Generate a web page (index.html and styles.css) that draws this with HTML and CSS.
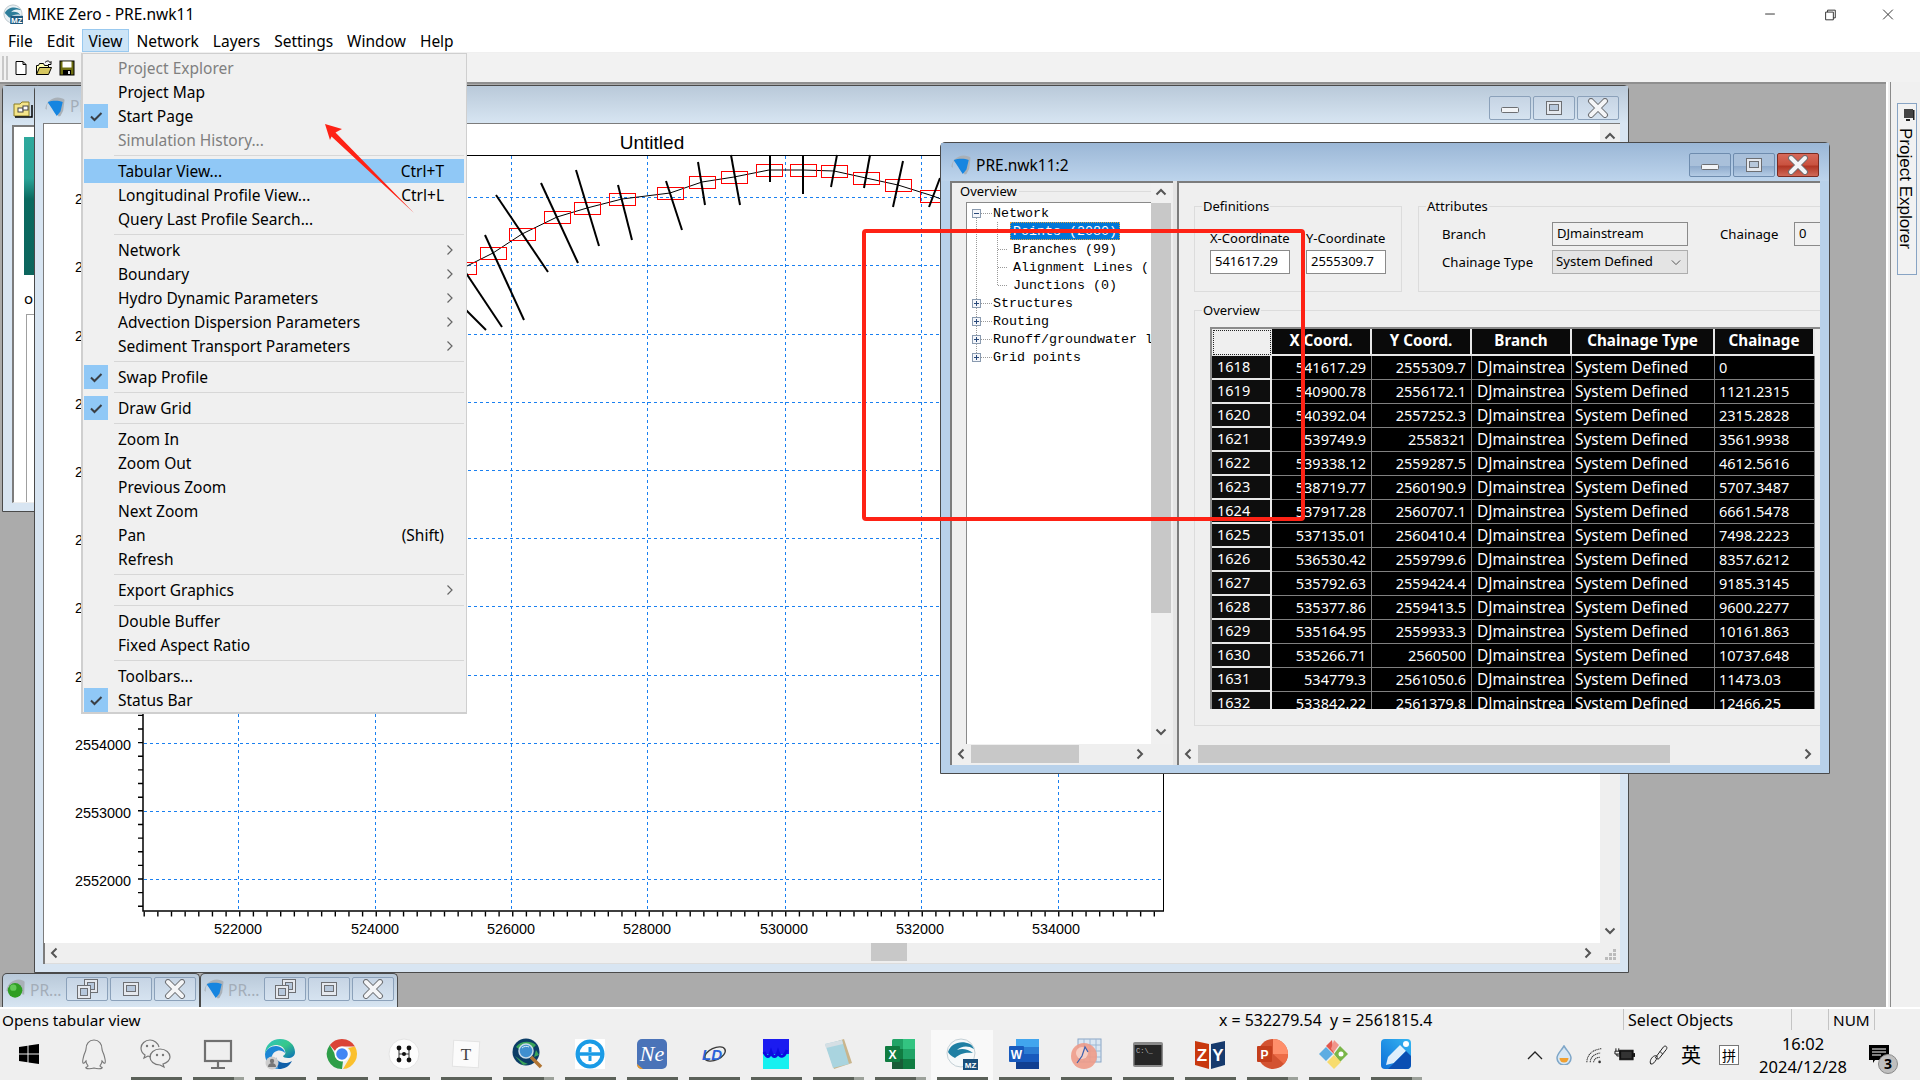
FILE: index.html
```html
<!DOCTYPE html>
<html lang="en">
<head>
<meta charset="utf-8">
<title>MIKE Zero - PRE.nwk11</title>
<link rel="stylesheet" href="styles.css">
</head>
<body>
<svg class="defs" aria-hidden="true">
  <defs>
    <symbol id="g-min" viewBox="0 0 24 20"><rect x="3.5" y="9.5" width="17" height="5" rx="1" fill="#f2f4f7" stroke="#6d6f73"/></symbol>
    <symbol id="g-max" viewBox="0 0 24 20"><rect x="4.5" y="3.5" width="15" height="13" fill="#e4e8ee" stroke="#6d6f73"/><rect x="7.5" y="6.5" width="9" height="6" fill="#b7c8dc" stroke="#6d6f73"/></symbol>
    <symbol id="g-close" viewBox="0 0 24 20"><path d="M5 3l14 14M19 3L5 17" stroke="#6d6f73" stroke-width="6" stroke-linecap="round"/><path d="M5 3l14 14M19 3L5 17" stroke="#f4f5f7" stroke-width="4" stroke-linecap="round"/></symbol>
    <symbol id="g-restore" viewBox="0 0 24 20"><rect x="9.5" y="0.5" width="13" height="13" fill="#e4e8ee" stroke="#6d6f73"/><rect x="12.5" y="3.5" width="7" height="7" fill="#b7c8dc" stroke="#6d6f73"/><rect x="2.5" y="6.5" width="13" height="13" fill="#e4e8ee" stroke="#6d6f73"/><rect x="5.5" y="9.5" width="7" height="7" fill="#b7c8dc" stroke="#6d6f73"/></symbol>
    <symbol id="chev" viewBox="0 0 12 12"><path d="M1.5 8.5L6 4l4.500 4.500" fill="none" stroke="#555" stroke-width="2"/></symbol>
    <symbol id="wedge" viewBox="0 0 22 22"><path d="M0.500 13C1 6 7 0.500 14 0.500c3 0 6 1 7.500 2.500L20 15l-3 6-2 0.500C12 15 6 9 3 7 2 9 1.500 11 2 14z" fill="#a9b0b7"/><path d="M3 5.500c5-2 12-2 16.500 0L17 16l-4 5C9 15 6 10 3 5.500z" fill="#1685e0"/></symbol>
    <symbol id="ball" viewBox="0 0 22 22"><path d="M0.500 13C1 6 7 0.500 14 0.500c3 0 5 1 6.500 2.500L20 17h-2C18 9 9 5 3 8c-1 2-1 4-1 6z" fill="#a9b0b7"/><circle cx="10" cy="12.500" r="8" fill="#2f9e24"/><circle cx="8" cy="9.500" r="3.500" fill="#63c957"/></symbol>
    <symbol id="chk" viewBox="0 0 24 24"><path d="M7 12.500l3.500 3.500L17.500 9" fill="none" stroke="#3a3f45" stroke-width="2"/></symbol>
    <symbol id="sub" viewBox="0 0 8 12"><path d="M1.500 1.500L6 6l-4.500 4.500" fill="none" stroke="#666" stroke-width="1.200"/></symbol>
  </defs>
</svg>

<div class="app">
  <header class="titlebar">
    <svg class="appicon" viewBox="0 0 22 22"><circle cx="11" cy="11" r="10" fill="#e8f0f4" stroke="#b9c4ca"/><path d="M2 10C5 3 15 2 20 7c-5-2-9-1-11 2 4-1 8 0 10 3-4-1-9 0-12 3z" fill="#2d7d9a"/><rect x="8" y="13" width="14" height="9" fill="#1e5a80"/><text x="15" y="21" class="appicon-t">MZ</text></svg>
    <span class="titletext">MIKE Zero - PRE.nwk11</span>
    <div class="capbtns">
      <svg class="cap" viewBox="0 0 58 30"><path d="M24 14.500h10" stroke="#333" fill="none"/></svg>
      <svg class="cap" viewBox="0 0 58 30"><path d="M25.500 12.500h8v8h-8zM27.500 12.500v-2h8v8h-2" stroke="#333" fill="none"/></svg>
      <svg class="cap" viewBox="0 0 58 30"><path d="M24 10l10 10M34 10L24 20" stroke="#333" fill="none"/></svg>
    </div>
  </header>

  <nav class="menubar">
    <span class="mi">File</span><span class="mi">Edit</span><span class="mi mi-on">View</span><span class="mi">Network</span><span class="mi">Layers</span><span class="mi">Settings</span><span class="mi">Window</span><span class="mi">Help</span>
  </nav>

  <div class="toolbar">
    <span class="grip"></span>
    <svg class="tool" viewBox="0 0 16 16"><path d="M3 1.500h7l3 3v10H3z" fill="#fff" stroke="#000"/><path d="M10 1.500v3h3" fill="none" stroke="#000"/></svg>
    <svg class="tool" viewBox="0 0 16 16"><path d="M0.500 14.500v-9h2l1-2h4l1 2h4v2" fill="#ffffb0" stroke="#000"/><path d="M0.500 14.500l3-7h12l-3 7z" fill="#d6c760" stroke="#000"/><path d="M9 2.500c2-2 4-2 5 0l1-1v3h-3" fill="none" stroke="#000"/></svg>
    <svg class="tool" viewBox="0 0 16 16"><rect x="1" y="1" width="14" height="14" fill="#6e6e10" stroke="#000"/><rect x="3.500" y="1.500" width="9" height="6" fill="#fff"/><rect x="4" y="10" width="8" height="5" fill="#000"/><rect x="9" y="11" width="2" height="3" fill="#ddd"/></svg>
  </div>

  <div class="workspace">
    <main class="mdi">
      <section class="win win1">
        <div class="win-title win-title-pale">
          <svg class="folder" viewBox="0 0 20 18"><path d="M1 16V4h6l2-2h7v14z" fill="#f4e58a" stroke="#8a7d22"/><rect x="5" y="8" width="5" height="4" fill="#fff" stroke="#444"/><rect x="10" y="6" width="5" height="4" fill="#fff" stroke="#444"/><path d="M2 17h17V5" fill="none" stroke="#000" stroke-width="1.500"/></svg>
        </div>
        <div class="win1-client">
          <div class="teal"></div>
          <span class="win1-o">o</span>
          <div class="win1-box"></div>
        </div>
      </section>

      <section class="win win2">
        <div class="win-title win-title-pale">
          <svg class="wicon"><use href="#wedge"/></svg>
          <span class="wname wname-off">PRE.nwk11:1</span>
          <div class="wbtns">
            <span class="wb"><svg class="glyph"><use href="#g-min"/></svg></span>
            <span class="wb"><svg class="glyph"><use href="#g-max"/></svg></span>
            <span class="wb"><svg class="glyph"><use href="#g-close"/></svg></span>
          </div>
        </div>
        <div class="win2-client">
          <div class="canvas-row">
            <svg class="chart" viewBox="44 124 1556 819" width="1556" height="819">
              <text x="652" y="149" class="ct-title">Untitled</text>
              <g class="grid">
                <path d="M144 197.500H1163M144 265.500H1163M144 334.500H1163M144 402.500H1163M144 470.500H1163M144 538.500H1163M144 606.500H1163M144 675.500H1163M144 743.500H1163M144 811.500H1163M144 879.500H1163"/>
                <path d="M238.500 156V911M375.500 156V911M511.500 156V911M647.500 156V911M785.500 156V911M921.500 156V911M1058.500 156V911"/>
              </g>
              <path d="M143 155.500H1163.500V911" class="axis-thin"/>
              <path d="M143 155V911H1164" class="axis-bold"/>
              <line x1="140.500" y1="907" x2="140.500" y2="155" class="ticks-y"/>
              <line x1="143.500" y1="914" x2="1163" y2="914" class="ticks-x"/>
              <g class="lab-y">
                <text x="131" y="203.500">2562000</text><text x="131" y="271.500">2561000</text><text x="131" y="340.500">2560000</text><text x="131" y="408.500">2559000</text><text x="131" y="476.500">2558000</text><text x="131" y="544.500">2557000</text><text x="131" y="612.500">2556000</text><text x="131" y="681.500">2555000</text><text x="131" y="749.500">2554000</text><text x="131" y="817.500">2553000</text><text x="131" y="885.500">2552000</text>
              </g>
              <g class="lab-x">
                <text x="238" y="934">522000</text><text x="375" y="934">524000</text><text x="511" y="934">526000</text><text x="647" y="934">528000</text><text x="784" y="934">530000</text><text x="920" y="934">532000</text><text x="1056" y="934">534000</text>
              </g>
              <polyline class="link" points="463,268 493,253 522,234 557,217 587,208 622,199 670,193 702,182 734,177 769,170 803,170 834,171 866,178 898,185 933,196 970,210"/>
              <g class="bx">
                <rect x="450.500" y="262.500" width="26" height="12"/><rect x="480.500" y="247.500" width="26" height="12"/><rect x="509.500" y="228.500" width="26" height="12"/><rect x="544.500" y="211.500" width="26" height="12"/><rect x="574.500" y="202.500" width="26" height="12"/><rect x="609.500" y="193.500" width="26" height="12"/><rect x="657.500" y="187.500" width="26" height="12"/><rect x="689.500" y="176.500" width="26" height="12"/><rect x="721.500" y="171.500" width="26" height="12"/><rect x="756.500" y="164.500" width="26" height="12"/><rect x="790.500" y="164.500" width="26" height="12"/><rect x="821.500" y="165.500" width="26" height="12"/><rect x="853.500" y="172.500" width="26" height="12"/><rect x="885.500" y="179.500" width="26" height="12"/><rect x="920.500" y="190.500" width="26" height="12"/>
              </g>
              <g class="xs">
                <line x1="440" y1="234" x2="502" y2="327"/><line x1="440" y1="284" x2="486" y2="330"/>
                <line x1="485" y1="235" x2="524" y2="320"/><line x1="496" y1="195" x2="548" y2="272"/><line x1="541" y1="183" x2="578" y2="263"/><line x1="576" y1="170" x2="599" y2="246"/><line x1="618" y1="185" x2="632" y2="240"/><line x1="666" y1="181" x2="682" y2="230"/><line x1="698" y1="162" x2="705" y2="205"/><line x1="731" y1="155" x2="740" y2="205"/><line x1="770" y1="155" x2="770" y2="182"/><line x1="803" y1="155" x2="803" y2="194"/><line x1="837" y1="155" x2="831" y2="187"/><line x1="870" y1="155" x2="864" y2="188"/><line x1="903" y1="161" x2="893" y2="207"/><line x1="940" y1="178" x2="929" y2="207"/>
              </g>
            </svg>
            <div class="vscroll2">
              <svg class="arrow"><use href="#chev"/></svg>
              <svg class="arrow rot180"><use href="#chev"/></svg>
            </div>
          </div>
          <div class="hscroll2">
            <svg class="arrow rot270"><use href="#chev"/></svg>
            <span class="thumb2"></span>
            <svg class="arrow rot90"><use href="#chev"/></svg>
            <svg class="sizegrip" viewBox="0 0 12 12"><path d="M8 0h3v3H8zM4 4h3v3H4zM8 4h3v3H8zM0 8h3v3H0zM4 8h3v3H4zM8 8h3v3H8z" fill="#bbb"/></svg>
          </div>
        </div>
      </section>

      <section class="win win3">
        <div class="win-title win-title-active">
          <svg class="wicon"><use href="#wedge"/></svg>
          <span class="wname">PRE.nwk11:2</span>
          <div class="wbtns">
            <span class="wb wb-dark"><svg class="glyph"><use href="#g-min"/></svg></span>
            <span class="wb wb-dark"><svg class="glyph"><use href="#g-max"/></svg></span>
            <span class="wb wb-red"><svg class="glyph"><use href="#g-close"/></svg></span>
          </div>
        </div>
        <div class="win3-client">
          <div class="lp">
            <div class="lp-main">
              <div class="lp-col">
                <div class="lp-legend"><span>Overview</span></div>
                <div class="tree">
                  <svg class="tree-lines" width="40" height="170" viewBox="966 203 40 170">
                    <path d="M975.500 218V299M975.500 308V317M975.500 326V335M975.500 344V353M980 213.500H991M980 303.500H991M980 321.500H991M980 339.500H991M980 357.500H991M996.500 222V286M997 231.500H1010M997 249.500H1010M997 267.500H1010M997 285.500H1010" class="dots"/>
                    <g class="exp">
                      <rect x="971.500" y="209.500" width="8" height="8"/><rect x="971.500" y="299.500" width="8" height="8"/><rect x="971.500" y="317.500" width="8" height="8"/><rect x="971.500" y="335.500" width="8" height="8"/><rect x="971.500" y="353.500" width="8" height="8"/>
                      <path d="M973 213.500h5M973 303.500h5M975.500 301v5M973 321.500h5M975.500 319v5M973 339.500h5M975.500 337v5M973 357.500h5M975.500 355v5" class="sign"/>
                    </g>
                  </svg>
                  <div class="node root">Network</div>
                  <div class="node kid sel">Points (2080)</div>
                  <div class="node kid">Branches (99)</div>
                  <div class="node kid">Alignment Lines (</div>
                  <div class="node kid">Junctions (0)</div>
                  <div class="node root">Structures</div>
                  <div class="node root">Routing</div>
                  <div class="node root">Runoff/groundwater l</div>
                  <div class="node root">Grid points</div>
                </div>
              </div>
              <div class="lp-v">
                <svg class="arrow"><use href="#chev"/></svg>
                <span class="lp-thumb"></span>
                <span class="grow"></span>
                <svg class="arrow rot180"><use href="#chev"/></svg>
              </div>
            </div>
            <div class="lp-h">
              <svg class="arrow rot270"><use href="#chev"/></svg>
              <span class="lp-hthumb"></span>
              <span class="grow"></span>
              <svg class="arrow rot90"><use href="#chev"/></svg>
            </div>
          </div>
          <div class="split"></div>
          <div class="rp">
            <div class="rp-body">
              <div class="rp-top">
                <div class="group g-def">
                  <span class="legend">Definitions</span>
                  <div class="coord"><label>X-Coordinate</label><span class="input">541617.29</span></div>
                  <div class="coord"><label>Y-Coordinate</label><span class="input">2555309.7</span></div>
                </div>
                <div class="group g-attr">
                  <span class="legend">Attributes</span>
                  <label>Branch</label><span class="input input-wide">DJmainstream</span><label class="lab-ch">Chainage</label><span class="input input-short">0</span>
                  <label>Chainage Type</label>
                  <span class="select">System Defined<svg class="sel-arrow" viewBox="0 0 12 8"><path d="M1 1.500l5 5 5-5" fill="none" stroke="#555" stroke-width="1.200"/></svg></span>
                </div>
              </div>
              <div class="group g-over">
                <span class="legend">Overview</span>
                <div class="tbl-wrap">
                  <table class="tbl">
                    <colgroup><col class="c-rh"><col class="c-n"><col class="c-n"><col class="c-n"><col class="c-t"><col class="c-n"></colgroup>
                    <thead><tr><th class="corner"></th><th>X Coord.</th><th>Y Coord.</th><th>Branch</th><th>Chainage Type</th><th>Chainage</th></tr></thead>
                    <tbody>
                      <tr><th>1618</th><td class="r">541617.29</td><td class="r">2555309.7</td><td>DJmainstrea</td><td>System Defined</td><td>0</td></tr>
                      <tr><th>1619</th><td class="r">540900.78</td><td class="r">2556172.1</td><td>DJmainstrea</td><td>System Defined</td><td>1121.2315</td></tr>
                      <tr><th>1620</th><td class="r">540392.04</td><td class="r">2557252.3</td><td>DJmainstrea</td><td>System Defined</td><td>2315.2828</td></tr>
                      <tr><th>1621</th><td class="r">539749.9</td><td class="r">2558321</td><td>DJmainstrea</td><td>System Defined</td><td>3561.9938</td></tr>
                      <tr><th>1622</th><td class="r">539338.12</td><td class="r">2559287.5</td><td>DJmainstrea</td><td>System Defined</td><td>4612.5616</td></tr>
                      <tr><th>1623</th><td class="r">538719.77</td><td class="r">2560190.9</td><td>DJmainstrea</td><td>System Defined</td><td>5707.3487</td></tr>
                      <tr><th>1624</th><td class="r">537917.28</td><td class="r">2560707.1</td><td>DJmainstrea</td><td>System Defined</td><td>6661.5478</td></tr>
                      <tr><th>1625</th><td class="r">537135.01</td><td class="r">2560410.4</td><td>DJmainstrea</td><td>System Defined</td><td>7498.2223</td></tr>
                      <tr><th>1626</th><td class="r">536530.42</td><td class="r">2559799.6</td><td>DJmainstrea</td><td>System Defined</td><td>8357.6212</td></tr>
                      <tr><th>1627</th><td class="r">535792.63</td><td class="r">2559424.4</td><td>DJmainstrea</td><td>System Defined</td><td>9185.3145</td></tr>
                      <tr><th>1628</th><td class="r">535377.86</td><td class="r">2559413.5</td><td>DJmainstrea</td><td>System Defined</td><td>9600.2277</td></tr>
                      <tr><th>1629</th><td class="r">535164.95</td><td class="r">2559933.3</td><td>DJmainstrea</td><td>System Defined</td><td>10161.863</td></tr>
                      <tr><th>1630</th><td class="r">535266.71</td><td class="r">2560500</td><td>DJmainstrea</td><td>System Defined</td><td>10737.648</td></tr>
                      <tr><th>1631</th><td class="r">534779.3</td><td class="r">2561050.6</td><td>DJmainstrea</td><td>System Defined</td><td>11473.03</td></tr>
                      <tr><th>1632</th><td class="r">533842.22</td><td class="r">2561379.8</td><td>DJmainstrea</td><td>System Defined</td><td>12466.25</td></tr>
                    </tbody>
                  </table>
                </div>
              </div>
            </div>
            <div class="rp-h">
              <svg class="arrow rot270"><use href="#chev"/></svg>
              <span class="rp-hthumb"></span>
              <span class="grow"></span>
              <svg class="arrow rot90"><use href="#chev"/></svg>
            </div>
          </div>
        </div>
      </section>

      <section class="win minw min1">
        <svg class="wicon"><use href="#ball"/></svg>
        <span class="minname">PR...</span>
        <span class="wb"><svg class="glyph"><use href="#g-restore"/></svg></span>
        <span class="wb"><svg class="glyph"><use href="#g-max"/></svg></span>
        <span class="wb"><svg class="glyph"><use href="#g-close"/></svg></span>
      </section>
      <section class="win minw min2">
        <svg class="wicon"><use href="#wedge"/></svg>
        <span class="minname">PR...</span>
        <span class="wb"><svg class="glyph"><use href="#g-restore"/></svg></span>
        <span class="wb"><svg class="glyph"><use href="#g-max"/></svg></span>
        <span class="wb"><svg class="glyph"><use href="#g-close"/></svg></span>
      </section>
    </main>

    <aside class="sidepanel">
      <div class="sidetab">
        <svg class="sideicon" viewBox="0 0 14 14"><path d="M3 1h9v9H3zM5 3h5v5H5z" fill="#444"/><path d="M5 11h4v2H5zM12 2h1.500v10H12z" fill="#222"/></svg>
        <span class="sidetext">Project Explorer</span>
      </div>
    </aside>
  </div>

  <footer class="statusbar">
    <span class="st st-a">Opens tabular view</span>
    <span class="st st-b">x = 532279.54&nbsp; y = 2561815.4</span>
    <span class="st st-c">Select Objects</span>
    <span class="st st-d"></span>
    <span class="st st-e">NUM</span>
  </footer>

  <div class="taskbar">
    <span class="task task-start"><svg class="ti ti-win" viewBox="0 0 20 20"><path d="M0 3l8.500-1.200V9.500H0zM9.500 1.600L20 0v9.500H9.500zM0 10.500h8.500v7.700L0 17zM9.500 10.500H20V20L9.500 18.400z" fill="#000"/></svg></span>
    <span class="task"><svg class="ti" viewBox="0 0 32 32"><path d="M16 2c-5 0-8 4-8 9 0 2-1 3-2 6-1 4-2 7-1 8s2-1 3-2c0 3 2 4 2 5s-3 1-2 2 5 1 8 0c3 1 7 1 8 0s-2-1-2-2 2-2 2-5c1 1 2 3 3 2s0-4-1-8c-1-3-2-4-2-6 0-5-3-9-8-9z" fill="none" stroke="#777" stroke-width="1.100"/></svg></span>
    <span class="task on"><svg class="ti" viewBox="0 0 32 32"><g fill="none" stroke="#777" stroke-width="1.200"><path d="M19 9c-1-4-5-7-9-7C5 2 1 6 1 10c0 3 1 5 4 7l-1 3 4-2c1 0 2 1 3 1"/><path d="M20 11c-6 0-10 4-10 8s4 8 10 8l4 2-1-3c4-1 7-4 7-7 0-4-4-8-10-8z"/></g><g fill="#777"><circle cx="7" cy="8" r="1.200"/><circle cx="13" cy="8" r="1.200"/><circle cx="17" cy="17" r="1.200"/><circle cx="23" cy="17" r="1.200"/></g></svg></span>
    <span class="task on multi"><svg class="ti" viewBox="0 0 32 32"><rect x="3" y="3" width="26" height="20" fill="none" stroke="#707070" stroke-width="2.200"/><path d="M16 23v6M9 30h14" stroke="#707070" stroke-width="2.200"/></svg></span>
    <span class="task on"><svg class="ti" viewBox="0 0 32 32"><defs><linearGradient id="edge" x1="0" y1="0" x2="1" y2="1"><stop offset="0" stop-color="#2fc3c4"/><stop offset=".5" stop-color="#36c889"/><stop offset="1" stop-color="#0a6bb8"/></linearGradient></defs><path d="M1 16C1 7 8 1 16 1c9 0 15 6 15 13 0 4-3 6-7 6-3 0-5-1-5-2 2-1 3-3 2-5-1-4-5-6-9-6C7 7 2 11 1 16z" fill="url(#edge)"/><path d="M1 16c1-5 6-8 11-8 5 0 9 4 9 7-2-2-5-3-8-2-4 1-6 5-5 9 1 4 5 8 9 9C8 32 1 25 1 16z" fill="#1b86d4"/><path d="M15 31c5 0 10-2 13-8-3 2-8 3-12 1-2-1-4-3-4-5 0 6 1 11 3 12z" fill="#0f5fa8"/><circle cx="8" cy="25" r="6.500" fill="#cdcdcd"/><circle cx="8" cy="23" r="2.200" fill="#777"/><path d="M4 29c0-3 2-4 4-4s4 1 4 4z" fill="#777"/></svg></span>
    <span class="task on"><svg class="ti" viewBox="0 0 32 32"><path d="M16 1a15 15 0 0 1 13 7.500H16a7.500 7.500 0 0 0-7 4.500L3.800 7A15 15 0 0 1 16 1z" fill="#db4437"/><path d="M29 8.500A15 15 0 0 1 17 31l6.500-11A7.500 7.500 0 0 0 22 10z" fill="#fbc02d"/><path d="M3.800 7L10 18a7.500 7.500 0 0 0 7 5l-1 8A15 15 0 0 1 3.800 7z" fill="#2e9e48"/><circle cx="16" cy="16" r="7.500" fill="#fff"/><circle cx="16" cy="16" r="5.800" fill="#4285f4"/></svg></span>
    <span class="task on"><svg class="ti" viewBox="0 0 32 32"><circle cx="16" cy="16" r="15" fill="#fdfdfd" stroke="#e4e4e4"/><path d="M11 10v12M21 10v12M11 16h10" stroke="#333"/><g fill="#111"><circle cx="11" cy="10" r="2.400"/><circle cx="21" cy="10" r="2.400"/><circle cx="11" cy="22" r="2.400"/><circle cx="21" cy="22" r="2.400"/><circle cx="16" cy="16" r="2"/></g></svg></span>
    <span class="task on"><svg class="ti" viewBox="0 0 32 32"><rect x="3" y="3" width="26" height="26" fill="#fbfbfb" stroke="#e3e3e3" transform="rotate(3 16 16)"/><text x="16" y="22" class="ti-t">T</text></svg></span>
    <span class="task on multi"><svg class="ti" viewBox="0 0 32 32"><circle cx="14" cy="14" r="13.500" fill="#0b3d66"/><path d="M4 9c4-6 14-7 20-2l-5 5-9 1zM3 18c3 2 7 6 13 8l-5 1zM24 12l3 5-5 2z" fill="#3aa45a"/><circle cx="14" cy="13" r="7" fill="#3f8fcf" stroke="#c9dbe8" stroke-width="1.500"/><path d="M10 10c2-2 5-2 7-1" fill="none" stroke="#d9eefb"/><path d="M19 19l10 10" stroke="#b07432" stroke-width="3.500"/></svg></span>
    <span class="task on"><svg class="ti" viewBox="0 0 32 32"><rect x="1" y="1" width="30" height="30" fill="#fff"/><circle cx="16" cy="16" r="12.500" fill="none" stroke="#1a9be6" stroke-width="4"/><path d="M4 16h24" stroke="#1a9be6" stroke-width="3.500"/><path d="M16 9v5M16 18v5" stroke="#1a9be6" stroke-width="3"/></svg></span>
    <span class="task on"><svg class="ti" viewBox="0 0 32 32"><rect x="1" y="1" width="30" height="30" rx="5" fill="#4a73b8"/><path d="M1 26l6 5H6c-3 0-5-2-5-5z" fill="#e99a2c"/><text x="16" y="23" class="ti-ne">Ne</text></svg></span>
    <span class="task on"><svg class="ti" viewBox="0 0 32 32"><ellipse cx="17" cy="16" rx="11" ry="6" fill="none" stroke="#3a3a3a" stroke-width="1.400" transform="rotate(-25 17 16)"/><text x="14" y="22" class="ti-ld">LD</text></svg></span>
    <span class="task on"><svg class="ti" viewBox="0 0 32 32"><rect x="3" y="1" width="26" height="15" fill="#1b1bf0"/><rect x="3" y="16" width="26" height="15" fill="#16f0f0"/><path d="M4 14c3 6 5 6 7 0 2 6 5 6 7 0 2 6 6 6 9-2" fill="none" stroke="#0b0be0" stroke-width="3"/></svg></span>
    <span class="task on multi"><svg class="ti" viewBox="0 0 32 32"><path d="M4 7l18-6 8 24-18 6z" fill="#c9b58c"/><path d="M3 6l17-4 7 24-16 4z" fill="#a9d4df"/><path d="M3 6l17-4 1 4-17 4z" fill="#d5dfe4"/></svg></span>
    <span class="task on multi"><svg class="ti" viewBox="0 0 32 32"><rect x="8" y="1" width="23" height="30" rx="1.500" fill="#21a366"/><rect x="19" y="1" width="12" height="10" fill="#33c481"/><rect x="8" y="11" width="11" height="10" fill="#107c41"/><rect x="19" y="21" width="12" height="10" fill="#107c41"/><rect x="8" y="21" width="11" height="10" fill="#185c37"/><rect x="1" y="8" width="15" height="16" rx="1" fill="#107c41"/><text x="8.500" y="20.500" class="ti-x">X</text></svg></span>
    <span class="task on cur"><svg class="ti" viewBox="0 0 32 32"><circle cx="15" cy="15" r="14" fill="#f6f9fa" stroke="#c4d0d6"/><path d="M2 14C5 5 15 2 24 6c2 1 3 3 4 5-6-4-13-3-17 1 5-2 11-1 16 3-6-1-13 0-18 5-4-2-6-4-7-6z" fill="#1f7fa3"/><rect x="17" y="21" width="15" height="11" fill="#1a4f7a"/><text x="24.500" y="30" class="ti-mz">MZ</text></svg></span>
    <span class="task on"><svg class="ti" viewBox="0 0 32 32"><rect x="8" y="1" width="23" height="30" rx="1.500" fill="#2b7cd3"/><rect x="8" y="1" width="23" height="8" fill="#41a5ee"/><rect x="8" y="16" width="23" height="8" fill="#185abd"/><rect x="8" y="24" width="23" height="7" fill="#103f91"/><rect x="1" y="8" width="15" height="16" rx="1" fill="#185abd"/><text x="8.500" y="20.500" class="ti-x">W</text></svg></span>
    <span class="task on"><svg class="ti" viewBox="0 0 32 32"><rect x="8" y="1" width="23" height="23" fill="#dbe7f2" stroke="#8aa6c6"/><path d="M14 1v23M20 1v23M26 1v23M8 7h23M8 13h23M8 19h23" stroke="#9db8d4"/><circle cx="14" cy="18" r="13" fill="#ee9b88" opacity=".9"/><circle cx="12" cy="15" r="6" fill="#fbe1d8" opacity=".7"/><path d="M7 25l5-7 3-9 3 5" fill="none" stroke="#3a5fae" stroke-width="1.200"/></svg></span>
    <span class="task on"><svg class="ti" viewBox="0 0 32 32"><rect x="1" y="4" width="30" height="25" rx="2" fill="#8a8a8a"/><rect x="2.500" y="7" width="27" height="20" fill="#262626"/><text x="4" y="15" class="ti-c">C:\_</text></svg></span>
    <span class="task on"><svg class="ti" viewBox="0 0 32 32"><path d="M1 3l14 3v25L1 27z" fill="#c8380e"/><path d="M31 3L17 6v25l14-4z" fill="#163a6d"/><text x="8" y="23" class="ti-zy">Z</text><text x="24" y="23" class="ti-zy">Y</text></svg></span>
    <span class="task on multi"><svg class="ti" viewBox="0 0 32 32"><circle cx="17" cy="16" r="15" fill="#d35230"/><path d="M17 1a15 15 0 0 1 15 15H17z" fill="#ff8f6b"/><path d="M17 16h15a15 15 0 0 1-4 10z" fill="#ed6c47"/><rect x="1" y="8" width="15" height="16" rx="1" fill="#c43e1c"/><text x="8.500" y="20.500" class="ti-x">P</text></svg></span>
    <span class="task on"><svg class="ti" viewBox="0 0 32 32"><path d="M16 16L8 8l6-6z" fill="#e2574c"/><path d="M16 16l6-8 8 8-8 8z" fill="#7ab648"/><path d="M16 17l7 7-7 7-7-7z" fill="#f7dc6f"/><path d="M15 16l-7 7-7-7 7-7z" fill="#5dade2"/><path d="M16 2l5 5-5 7-3-3z" fill="#f1948a"/><circle cx="23" cy="16" r="2.500" fill="#fff"/></svg></span>
    <span class="task on multi"><svg class="ti" viewBox="0 0 32 32"><defs><linearGradient id="pen" x1="0" y1="1" x2="1" y2="0"><stop offset="0" stop-color="#0d6fd8"/><stop offset="1" stop-color="#35b6f2"/></linearGradient></defs><rect x="1" y="1" width="30" height="30" rx="4" fill="url(#pen)"/><path d="M6 27l2-8L20 7l6 6-12 12z" fill="#fff" opacity=".85"/><path d="M14 25L26 13l5 5v9c0 2-2 4-4 4H8z" fill="#0a4fb3"/><circle cx="26" cy="6" r="3" fill="#fff"/></svg></span>
    <span class="grow"></span>
    <div class="tray">
      <svg class="tr tr-chev" viewBox="0 0 16 10"><path d="M1 9l7-7 7 7" fill="none" stroke="#222" stroke-width="1.300"/></svg>
      <svg class="tr tr-drop" viewBox="0 0 16 20"><path d="M8 1c3 5 7 8 7 12a7 7 0 0 1-14 0C1 9 5 6 8 1z" fill="#d7e6f2" stroke="#7ea6c8" stroke-width="1.500"/><path d="M3.500 13h9a4.500 4.500 0 0 1-9 0z" fill="#f0a030"/></svg>
      <svg class="tr tr-wifi" viewBox="0 0 20 20"><g fill="none" stroke="#333" stroke-width="1.200" stroke-dasharray="1.500 .7"><path d="M1 18C1 9 8 3 18 2"/><path d="M5 18c0-6 5-10 12-11"/><path d="M9 18c0-3 3-6 8-6"/></g><circle cx="16" cy="17.500" r="1.500" fill="#333"/></svg>
      <svg class="tr tr-bat" viewBox="0 0 22 14"><path d="M2 0v3M5 0v3M1 3h5v3H1zM3 6v2h3" fill="none" stroke="#111"/><rect x="6" y="2" width="14" height="10" fill="#111" stroke="#111"/><rect x="7.500" y="3.500" width="11" height="7" fill="#333"/><rect x="20" y="5" width="2" height="4" fill="#111"/></svg>
      <svg class="tr tr-pen" viewBox="0 0 22 22"><path d="M2 21c-2-3 1-8 4-9s4 1 2 4-3 5-6 5zM7 14L16 2c2-2 5 0 3 3l-8 10c-1 1-3 0-4-1zM12 7l3 3" fill="none" stroke="#222" stroke-width="1.100"/></svg>
      <span class="ime">英</span>
      <span class="ime-box">拼</span>
      <div class="clock"><span>16:02</span><span>2024/12/28</span></div>
      <div class="notif">
        <svg class="tr-note" viewBox="0 0 20 18"><path d="M0 0h20v15H6l-2 3v-3H0z" fill="#000"/><path d="M3 4h14M3 7h14M3 10h9" stroke="#fff" stroke-width="1"/></svg>
        <span class="badge">3</span>
      </div>
    </div>
  </div>

  <div class="menu">
    <div class="row off">Project Explorer</div>
    <div class="row">Project Map</div>
    <div class="row"><svg class="check"><use href="#chk"/></svg>Start Page</div>
    <div class="row off">Simulation History...</div>
    <div class="sep"></div>
    <div class="row hot">Tabular View...<span class="key">Ctrl+T</span></div>
    <div class="row">Longitudinal Profile View...<span class="key">Ctrl+L</span></div>
    <div class="row">Query Last Profile Search...</div>
    <div class="sep"></div>
    <div class="row">Network<svg class="more"><use href="#sub"/></svg></div>
    <div class="row">Boundary<svg class="more"><use href="#sub"/></svg></div>
    <div class="row">Hydro Dynamic Parameters<svg class="more"><use href="#sub"/></svg></div>
    <div class="row">Advection Dispersion Parameters<svg class="more"><use href="#sub"/></svg></div>
    <div class="row">Sediment Transport Parameters<svg class="more"><use href="#sub"/></svg></div>
    <div class="sep"></div>
    <div class="row"><svg class="check"><use href="#chk"/></svg>Swap Profile</div>
    <div class="sep"></div>
    <div class="row"><svg class="check"><use href="#chk"/></svg>Draw Grid</div>
    <div class="sep"></div>
    <div class="row">Zoom In</div>
    <div class="row">Zoom Out</div>
    <div class="row">Previous Zoom</div>
    <div class="row">Next Zoom</div>
    <div class="row">Pan<span class="key">(Shift)</span></div>
    <div class="row">Refresh</div>
    <div class="sep"></div>
    <div class="row">Export Graphics<svg class="more"><use href="#sub"/></svg></div>
    <div class="sep"></div>
    <div class="row">Double Buffer</div>
    <div class="row">Fixed Aspect Ratio</div>
    <div class="sep"></div>
    <div class="row">Toolbars...</div>
    <div class="row"><svg class="check"><use href="#chk"/></svg>Status Bar</div>
  </div>

  <svg class="annot" viewBox="0 0 1920 1080" width="1920" height="1080">
    <rect x="864" y="231" width="439" height="288" rx="2" class="annot-rect"/>
    <path d="M325 124L342 129 335.500 132.500 414 213 331.500 136.500 330 140z" class="annot-arrow"/>
  </svg>
</div>
</body>
</html>
```
FILE: styles.css
```css
:root {
  --ui: "Noto Sans", "Open Sans", sans-serif;
  --panel: #efefef;
}
* { box-sizing: border-box; }
html, body { margin: 0; padding: 0; }
body { width: 1920px; height: 1080px; overflow: hidden; font: 15.5px/1.2 var(--ui); color: #000; background: #fff; }
.defs { position: absolute; width: 0; height: 0; }
.grow { flex: 1; }

.app { position: relative; width: 1920px; height: 1080px; display: flex; flex-direction: column; }

/* title bar */
.titlebar { height: 29px; display: flex; align-items: center; padding: 0 0 1px 3px; background: #fff; flex: none; }
.appicon { width: 20px; height: 20px; margin-right: 4px; }
.appicon-t { font: bold 8px var(--ui); fill: #fff; text-anchor: middle; }
.titletext { font-size: 15.500px; }
.capbtns { margin-left: auto; display: flex; margin-right: 3px; }
.cap { width: 58px; height: 29px; display: block; margin-left: 1px; }

/* menu bar */
.menubar { height: 24px; display: flex; align-items: stretch; padding-left: 1px; background: #fff; flex: none; border-bottom: 1px solid #f0f0f0; }
.mi { padding: 0 7px; line-height: 22px; font-size: 15.500px; border: 1px solid transparent; border-width: 1px 0; }
.mi-on { background: #cce4f7; border: 1px solid #99c9ef; padding: 0 6px; }

/* tool bar */
.toolbar { height: 29px; display: flex; align-items: center; padding-left: 2px; background: #f2f2f2; flex: none; }
.grip { width: 6px; height: 24px; border-left: 2px solid #c8c8c8; border-right: 2px solid #c8c8c8; margin-right: 2px; }
.tool { width: 16px; height: 16px; margin: 0 4px 0 3px; }

/* workspace */
.workspace { flex: 1; display: flex; min-height: 0; }
.mdi { position: relative; flex: 1; background: #ababab; border-top: 2px solid #8f8f8f; overflow: hidden; }
.sidepanel { width: 34px; background: #f0f0f0; border-left: 2px solid #fff; position: relative; display: flex; padding: 21px 3px 0 9px; }
.sidepanel::before { content: ""; position: absolute; left: 2px; top: 0; bottom: 0; border-left: 1px solid #8a8a8a; }
.sidetab { width: 20px; height: 172px; border: 1px solid #88a4c4; display: flex; flex-direction: column; align-items: flex-start; padding-top: 4px; background: #f2f2f2; }
.sideicon { width: 14px; height: 14px; flex: none; margin-left: 3px; }
.sidetext { writing-mode: vertical-rl; font: 17px/14px "Liberation Sans", sans-serif; margin-top: 6px; white-space: nowrap; width: 14px; }

/* mdi windows */
.win { position: absolute; border: 1px solid #4a4a4a; border-radius: 5px 5px 0 0; }
.win-title { display: flex; align-items: flex-end; flex: none; }
.win-title-pale { background: linear-gradient(#b9c9d9, #d7e5f2); }
.win-title-active { background: linear-gradient(#9bb7d6, #bdd4ec); }

.wicon { width: 20px; height: 20px; flex: none; }
.folder { width: 20px; height: 18px; margin: 6px 0 0 10px; }
.wname { font-size: 15.500px; margin-left: 5px; }
.wname-off { color: #a3adb8; }
.wbtns { margin-left: auto; display: flex; gap: 2px; }
.wb { width: 42px; height: 24px; flex: none; border: 1px solid #8ba1ba; border-radius: 2px; background: linear-gradient(#c6d4e4, #d6e3f0); display: flex; align-items: center; justify-content: center; }
.wb-dark { background: linear-gradient(#a9c0da 0%, #a9c0da 55%, #8fabcc 56%, #b4cbe4 100%); border-color: #6e8cae; }
.wb-red { background: linear-gradient(#d7695a 0%, #c9523f 50%, #b03423 55%, #d06a58 100%); border-color: #7a2a20; }
.glyph { width: 24px; height: 20px; }

/* window 1 - start page behind */
.win1 { left: 2px; top: 1px; width: 80px; height: 427px; background: #d8e5f2; }
.win1 .win-title { height: 39px; align-items: center; }
.win1-client { margin: 0 0 0 9px; height: 378px; background: #fff; border-left: 2px solid #7c7c7c; border-top: 2px solid #7c7c7c; padding: 10px 0 0 10px; position: relative; overflow: hidden; border-bottom: 1px solid #eee; }
.teal { width: 40px; height: 138px; background: linear-gradient(#2ea99d 0%, #2aa397 30%, #0a6a60 45%, #0c655d 100%); }
.win1-o { display: block; margin-top: 14px; font-size: 15px; }
.win1-box { margin: 7px 0 0 2px; height: 200px; border: 1px solid #a0a0a0; }

/* window 2 - chart */
.win2 { left: 34px; top: 1px; width: 1595px; height: 888px; background: #d8e5f2; display: flex; flex-direction: column; padding-right: 8px; }
.win2 .win-title { height: 37px; padding: 0 9px 3px 10px; margin-right: -8px; }
.win2 .wicon { margin-bottom: 3px; }
.win2 .wname { margin-bottom: 4px; }
.win2-client { margin: 0 0 8px 8px; flex: 1; border-left: 2px solid #7c7c7c; border-top: 1px solid #7c7c7c; background: var(--panel); display: flex; flex-direction: column; min-height: 0; }
.canvas-row { flex: 1; display: flex; min-height: 0; }
.chart { display: block; flex: none; background: #fff; margin-left: -1px; }
.ct-title { font: 19px "Liberation Sans", sans-serif; text-anchor: middle; }
.axis-thin { fill: none; stroke: #000; stroke-width: 1; }
.axis-bold { fill: none; stroke: #000; stroke-width: 1.500; }
.grid path { fill: none; stroke: #1a80f0; stroke-width: 1; stroke-dasharray: 3 3; }
.ticks-y { stroke: #000; stroke-width: 5; stroke-dasharray: 1.400 12.240; }
.ticks-x { stroke: #000; stroke-width: 5; stroke-dasharray: 1.400 12.250; }
.lab-y text { font: 14.400px "Liberation Sans", sans-serif; text-anchor: end; }
.lab-x text { font: 14.400px "Liberation Sans", sans-serif; text-anchor: middle; }
.link { fill: none; stroke: #000; stroke-width: 1; }
.bx rect { fill: none; stroke: #f00; stroke-width: 1; shape-rendering: crispEdges; }
.xs line { stroke: #000; stroke-width: 2; }
.vscroll2 { width: 20px; display: flex; flex-direction: column; justify-content: space-between; align-items: center; padding: 6px 0 6px; background: var(--panel); }
.hscroll2 { height: 21px; flex: none; display: flex; align-items: center; padding-left: 3px; position: relative; background: var(--panel); border-bottom: 1px solid #ddd; }
.thumb2 { position: absolute; left: 826px; top: 0; width: 36px; height: 18px; background: #c8c8c8; }
.hscroll2 .rot90 { margin-left: auto; margin-right: 26px; }
.sizegrip { width: 12px; height: 12px; position: absolute; right: 3px; bottom: 2px; }
.arrow { width: 12px; height: 12px; flex: none; display: block; }
.rot90 { transform: rotate(90deg); }
.rot180 { transform: rotate(180deg); }
.rot270 { transform: rotate(270deg); }

/* window 3 - tabular view */
.win3 { left: 940px; top: 58px; width: 890px; height: 632px; background: #b8d1ea; display: flex; flex-direction: column; }
.win3 .win-title { height: 38px; padding: 0 10px 4px 10px; }
.win3 .wicon { margin-bottom: 2px; }
.win3 .wname { margin-bottom: 2px; }
.win3-client { flex: 1; display: flex; margin: 0 9px 8px 9px; min-height: 0; }

.lp { width: 223px; flex: none; background: var(--panel); border-left: 2px solid #7c7c7c; border-top: 2px solid #7c7c7c; display: flex; flex-direction: column; }
.lp-main { flex: 1; display: flex; min-height: 0; }
.lp-col { flex: 1; display: flex; flex-direction: column; min-width: 0; }
.lp-legend { height: 19px; flex: none; display: flex; align-items: center; padding: 0 0 2px 8px; font-size: 13px; }
.lp-legend::after { content: ""; flex: 1; border-top: 1px solid #dcdcdc; margin-left: 2px; }
.tree { flex: 1; margin-left: 14px; background: #fff; border-left: 1px solid #8a8a8a; border-top: 1px solid #8a8a8a; position: relative; padding: 1px 0 0 0; overflow: hidden; }
.tree-lines { position: absolute; left: 0; top: 0; }
.dots { fill: none; stroke: #999; stroke-dasharray: 1 1; }
.exp rect { fill: #f4f6fa; stroke: #8a9bb0; }
.sign { stroke: #2a4a7a; fill: none; }
.node { font: 13.333px/20px "Liberation Mono", monospace; height: 18px; white-space: nowrap; position: relative; width: max-content; }
.root { margin-left: 26px; }
.kid { margin-left: 43px; padding: 0 3px; }
.sel { background: #0078d7; color: #fff; outline: 1px dotted #e8a33d; outline-offset: -1px; }
.lp-v { width: 20px; flex: none; margin-right: 2px; display: flex; flex-direction: column; align-items: center; padding: 3px 0 6px; background: #f0f0f0; }
.lp-thumb { width: 100%; height: 410px; background: #c8c8c8; margin-top: 5px; }
.lp-h { height: 20px; flex: none; display: flex; align-items: center; padding: 0 27px 0 3px; margin-bottom: 1px; }
.lp-hthumb { width: 108px; height: 18px; background: #c8c8c8; margin-left: 4px; }

.split { width: 4px; flex: none; background: #e4e4e4; }

.rp { flex: 1; min-width: 0; background: var(--panel); border-left: 2px solid #7c7c7c; border-top: 2px solid #7c7c7c; display: flex; flex-direction: column; overflow: hidden; }
.rp-body { flex: 1; padding: 23px 0 0 15px; min-height: 0; font-size: 13.200px; }
.rp-top { display: flex; gap: 16px; width: 700px; }
.group { border: 1px solid #dcdcdc; position: relative; }
.legend { position: absolute; left: 7px; top: -9px; background: var(--panel); padding: 0 1px; font-size: 13px; line-height: 17px; }
.g-def { width: 208px; height: 86px; display: flex; gap: 16px; padding: 22px 0 0 15px; }
.coord { display: flex; flex-direction: column; gap: 3px; }
.coord label { line-height: 18px; white-space: nowrap; font-size: 13px; }
.input { display: block; width: 80px; height: 24px; border: 1px solid #8a8a8a; background: #fff; padding-left: 4px; line-height: 20px; font-size: 13px; }
.g-attr { width: 460px; height: 86px; display: grid; grid-template-columns: 110px 136px 106px 80px; grid-auto-rows: 24px; row-gap: 4px; padding: 15px 0 0 23px; align-items: center; }
.g-attr label { padding-top: 2px; }
.input-wide { width: 136px; background: #f0f0f0; }
.input-short { width: 40px; background: #f0f0f0; }
.lab-ch { padding-left: 32px; }
.select { display: flex; align-items: center; justify-content: space-between; width: 136px; height: 24px; border: 1px solid #adadad; background: #e4e4e4; padding: 0 6px 0 3px; grid-column: 2; }
.sel-arrow { width: 10px; height: 7px; }
.g-over { width: 700px; height: 416px; margin-top: 18px; padding: 16px 0 0 15px; }
.tbl-wrap { width: 680px; height: 382px; overflow: hidden; border-top: 2px solid #8a8a8a; border-left: 2px solid #8a8a8a; }
.tbl { table-layout: fixed; width: 603px; border-collapse: separate; border-spacing: 0; font-size: 14.500px; color: #fff; background: #000; }
.c-rh { width: 60px; }
.c-n { width: 100px; }
.c-t { width: 143px; }
.tbl thead th { height: 27px; font-size: 15.200px; font-weight: 700; text-align: center; padding: 0 0 2px; background: #0a0a0a; border-right: 2px solid #e8e8e8; border-bottom: 2px solid #e8e8e8; }
.tbl thead th.corner { background: #efefef; outline: 1px dotted #222; outline-offset: -2px; }
.tbl tbody th { height: 24px; font-weight: 400; text-align: left; padding: 0 0 0 5px; background: #0e0e0e; border-right: 2px solid #e8e8e8; border-bottom: 2px solid #e8e8e8; }
.tbl td { height: 24px; padding: 1px 3px 0; font-size: 15.400px; white-space: nowrap; overflow: hidden; border-right: 1px solid #808080; border-bottom: 1px solid #808080; background: #000; }
.tbl td:nth-child(4) { padding-left: 5px; }
.tbl td:last-child { font-size: 14.500px; padding: 0 3px 0 4px; }
.tbl td.r { text-align: right; padding: 0 5px 0 3px; font-size: 14.500px; }

.rp-h { height: 20px; flex: none; display: flex; align-items: center; padding: 0 6px 0 3px; margin-bottom: 1px; }
.rp-hthumb { width: 472px; height: 18px; background: #c8c8c8; margin-left: 4px; }

/* minimized windows */
.minw { height: 34px; top: 889px; display: flex; align-items: flex-start; padding: 3px 3px 0 3px; gap: 2px; background: linear-gradient(#b9c9d9, #d7e5f2); border-bottom: 0; }
.minw .wicon { margin-top: 2px; }
.minname { color: #a3adb8; font-size: 15.500px; width: 34px; flex: none; margin-top: 4px; margin-left: 2px; white-space: nowrap; }
.min1 { left: 2px; width: 198px; }
.min2 { left: 200px; width: 198px; }

/* status bar */
.statusbar { height: 23px; flex: none; display: flex; background: #f0f0f0; border-top: 2px solid #fff; font-size: 15.300px; line-height: 22px; }
.st { padding-left: 4px; white-space: nowrap; }
.st-a { width: 1215px; padding-left: 2px; }
.st-b { width: 408px; font-size: 15.900px; }
.st-c { width: 168px; border-left: 1px solid #c4c4c4; font-size: 16px; }
.st-d { width: 37px; border-left: 1px solid #c4c4c4; }
.st-e { width: 47px; border-left: 1px solid #c4c4c4; border-right: 1px solid #c4c4c4; }

/* task bar */
.taskbar { height: 50px; flex: none; display: flex; background: #efefef; }
.task { width: 62px; height: 50px; flex: none; position: relative; display: flex; align-items: center; justify-content: center; }
.task-start { width: 63px; padding-right: 6px; }
.task.on::after { content: ""; position: absolute; left: 5.500px; right: 5.500px; bottom: 0; height: 3px; background: #5b6159; }
.task.multi::after { background: linear-gradient(90deg, #5b6159 80%, #9ca19a 80%); }
.task.cur { background: #f9f9f9; }
.ti { width: 32px; height: 32px; display: block; margin-bottom: 2px; }
.ti-win { width: 20px; height: 20px; }
.ti-t { font: 17px "Liberation Serif", serif; fill: #444; text-anchor: middle; }
.ti-ne { font: italic 22px "Liberation Serif", serif; fill: #fff; text-anchor: middle; }
.ti-ld { font: italic bold 15px "Liberation Sans", sans-serif; fill: #2b62d9; text-anchor: middle; }
.ti-x { font: bold 12px "Liberation Sans", sans-serif; fill: #fff; text-anchor: middle; }
.ti-mz { font: bold 8px "Liberation Sans", sans-serif; fill: #fff; text-anchor: middle; }
.ti-c { font: 7px "Liberation Mono", monospace; fill: #bbb; }
.ti-zy { font: bold 17px "Liberation Sans", sans-serif; fill: #fff; text-anchor: middle; }

.tray { display: flex; align-items: center; position: relative; height: 50px; }
.tr { display: block; flex: none; }
.tr-chev { width: 16px; height: 10px; margin-right: 13px; }
.tr-drop { width: 16px; height: 20px; margin-right: 14px; }
.tr-wifi { width: 17px; height: 17px; margin-right: 11px; }
.tr-bat { width: 21px; height: 14px; margin-right: 14px; }
.tr-pen { width: 20px; height: 20px; margin-right: 12px; }
.ime { font: 20px "Noto Sans CJK SC", sans-serif; width: 22px; margin-right: 16px; line-height: 1; }
.ime-box { font: 14px "Noto Sans CJK SC", sans-serif; width: 20px; height: 20px; border: 1px solid #777; background: #fff; display: flex; align-items: center; justify-content: center; }
.clock { width: 110px; margin-left: 9px; display: flex; flex-direction: column; align-items: center; font-size: 16.500px; gap: 3px; line-height: 20px; }
.notif { width: 62px; height: 50px; position: relative; }
.tr-note { width: 20px; height: 18px; position: absolute; left: 11px; top: 15px; }
.badge { position: absolute; left: 20px; top: 24px; width: 20px; height: 20px; border-radius: 50%; background: #bfbfbf; border: 1px solid #8a8a8a; font-size: 14px; font-weight: 700; line-height: 18px; text-align: center; }

/* open menu */
.menu { position: absolute; left: 81px; top: 53px; width: 386px; height: 661px; background: #f0f0f0; border: 2px solid #cfcfcf; border-width: 1px 1px 2px 2px; padding: 2px 2px 0 1px; z-index: 5; }
.row { height: 24px; padding-left: 34px; padding-right: 20px; display: flex; align-items: center; font-size: 15.500px; position: relative; line-height: 24px; }
.off { color: #7f7f7f; }
.hot { background: #90c8f6; }
.check { position: absolute; left: 0; top: 0; width: 24px; height: 24px; background: #90c8f6; }
.key { margin-left: auto; }
.more { width: 8px; height: 12px; margin-left: auto; margin-right: -10px; }
.sep { height: 7px; margin-left: 30px; padding-top: 3px; }
.sep::before { content: ""; display: block; border-top: 1px solid #d7d7d7; }

/* annotation overlay */
.annot { position: absolute; left: 0; top: 0; z-index: 10; pointer-events: none; }
.annot-rect { fill: none; stroke: #fe2215; stroke-width: 4; }
.annot-arrow { fill: #fe2215; }
```
